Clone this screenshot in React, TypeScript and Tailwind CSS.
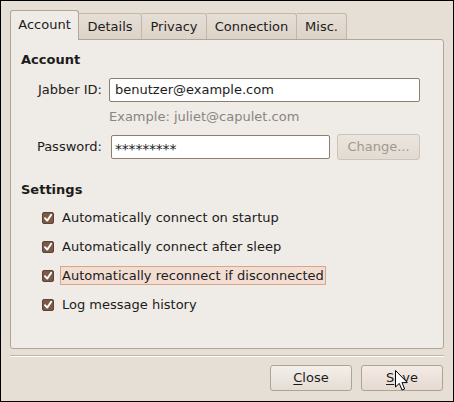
import React from "react";

const font = { fontFamily: '"DejaVu Sans", "Liberation Sans", sans-serif' };

function Check({ label, focused }: { label: string; focused?: boolean }) {
  return (
    <div className="flex items-center h-[19px] pl-[21px]">
      <div className="w-[12px] h-[12px] rounded-[2px] bg-[#7b5a48] border border-[#5e4232] flex items-center justify-center">
        <svg width="10" height="10" viewBox="0 0 10 10">
          <path d="M2 5.2 L4.2 7.6 L8.2 1.8" stroke="#ffffff" strokeWidth="1.9" fill="none" strokeLinecap="round" strokeLinejoin="round" />
        </svg>
      </div>
      <div
        className={
          "ml-[6px] h-[19px] flex items-center px-[1px] border " +
          (focused ? "border-[#d9a48c] bg-[#f1ddd2]" : "border-transparent")
        }
      >
        <span className="text-[13px] leading-[16px] text-[#1c1c1c]">{label}</span>
      </div>
    </div>
  );
}

export default function App() {
  const tabs = [
    { t: "Details", w: "w-[63px]" },
    { t: "Privacy", w: "w-[65px]" },
    { t: "Connection", w: "w-[90px]" },
    { t: "Misc.", w: "w-[50px]" },
  ];
  return (
    <div
      style={font}
      className="relative w-[454px] h-[402px] border border-black bg-[#e6dfd6] box-border flex flex-col pt-[9px] px-[9px] text-[#1c1c1c]"
    >
      {/* tabs */}
      <div className="flex items-end h-[29px] relative z-10">
        <div className="w-[69px] h-[30px] mb-[-1px] bg-[#efebe6] border border-b-0 border-[#b3a595] rounded-t-[3px] flex items-center justify-center pb-[1px]">
          <span className="text-[13px] leading-[16px]">Account</span>
        </div>
        {tabs.map((x) => (
          <div
            key={x.t}
            className={
              x.w +
              " h-[26px] bg-gradient-to-b from-[#e6dfd6] to-[#dcd3c8] border border-b-0 border-l-0 border-[#c2b7aa] rounded-tr-[3px] flex items-center justify-center"
            }
          >
            <span className="text-[13px] leading-[16px]">{x.t}</span>
          </div>
        ))}
      </div>

      {/* panel */}
      <div className="w-[434px] h-[310px] bg-[#efebe6] border border-[#b3a595] rounded-b-[3px] rounded-tr-[3px] flex flex-col pl-[10px] pt-[12px]">
        <div className="text-[13px] leading-[16px] font-bold">Account</div>

        <div className="flex items-center mt-[10px] h-[24px]">
          <div className="w-[81px] text-right text-[13px] leading-[16px]">Jabber ID:</div>
          <div className="ml-[7px] w-[311px] h-[24px] bg-white border border-[#8f7e6e] rounded-[2px] flex items-center pl-[5px]">
            <span className="text-[13px] leading-[16px]">benutzer@example.com</span>
          </div>
        </div>

        <div className="mt-[7px] pl-[88px] text-[13px] leading-[16px] text-[#8a857f]">
          Example: juliet@capulet.com
        </div>

        <div className="flex items-center mt-[9px] h-[26px]">
          <div className="w-[81px] text-right text-[13px] leading-[16px]">Password:</div>
          <div className="ml-[9px] w-[219px] h-[24px] bg-white border border-[#8f7e6e] rounded-[2px] flex items-center pl-[3px]">
            <span className="text-[14px] leading-[16px] tracking-[-0.2px] pt-[3px]">*********</span>
          </div>
          <div className="ml-[7px] w-[83px] h-[26px] rounded-[3px] border border-[#cdc3b7] bg-gradient-to-b from-[#ebe5de] to-[#e2dbd2] flex items-center justify-center">
            <span className="text-[13px] leading-[16px] text-[#a09990]">Change...</span>
          </div>
        </div>

        <div className="mt-[22px] text-[13px] leading-[16px] font-bold">Settings</div>

        <div className="mt-[10px] flex flex-col gap-[10px]">
          <Check label="Automatically connect on startup" />
          <Check label="Automatically connect after sleep" />
          <Check label="Automatically reconnect if disconnected" focused />
          <Check label="Log message history" />
        </div>
      </div>

      {/* separator */}
      <div className="mt-[6px] w-[434px] h-[1px] bg-[#bdb3a7]" />
      <div className="w-[434px] h-[1px] bg-white" />

      {/* buttons */}
      <div className="mt-[8px] flex justify-end gap-[9px] pr-[1px] w-[434px]">
        <div className="w-[82px] h-[26px] rounded-[3px] border border-[#b0a393] bg-gradient-to-b from-[#f3efea] to-[#e4ddd4] flex items-center justify-center">
          <span className="text-[13px] leading-[16px]">
            <span className="underline underline-offset-2">C</span>lose
          </span>
        </div>
        <div className="w-[82px] h-[26px] rounded-[3px] border border-[#b0a393] bg-gradient-to-b from-[#f3ebe5] to-[#e6dad2] flex items-center justify-center">
          <span className="text-[13px] leading-[16px]">
            <span className="underline underline-offset-2">S</span>ave
          </span>
        </div>
      </div>

      {/* mouse cursor */}
      <svg className="absolute left-[394px] top-[369px]" width="14" height="22" viewBox="0 0 14 22">
        <path d="M0.5 0.5 L0.5 17 L4.3 13.4 L7 20 L9.6 19 L7 12.6 L12.3 12.6 Z" fill="#ffffff" stroke="#000000" strokeWidth="1" strokeLinejoin="miter" />
      </svg>
    </div>
  );
}
